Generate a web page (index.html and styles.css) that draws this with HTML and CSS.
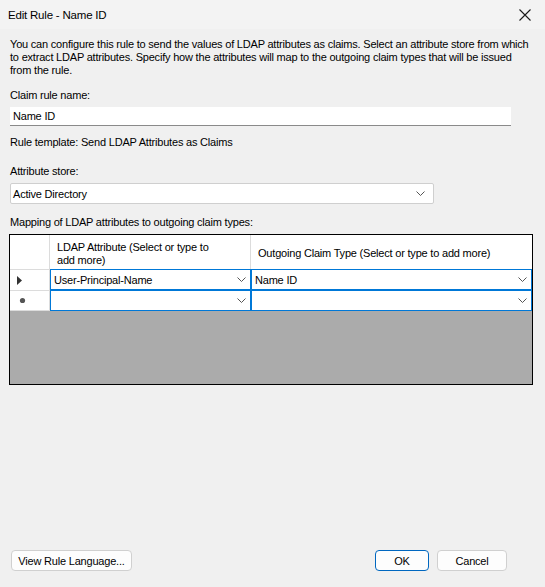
FILE: index.html
```html
<!DOCTYPE html>
<html>
<head>
<meta charset="utf-8">
<link rel="stylesheet" href="styles.css">
</head>
<body>
<div class="window">
  <div class="titlebar">
    <span class="title">Edit Rule - Name ID</span>
    <svg class="close" width="12" height="12" viewBox="0 0 12 12"><path d="M0.5 0.5 L11.5 11.5 M11.5 0.5 L0.5 11.5" stroke="#1a1a1a" stroke-width="1.1" fill="none"/></svg>
  </div>
  <div class="content">
    <p class="desc">You can configure this rule to send the values of LDAP attributes as claims. Select an attribute store from which to extract LDAP attributes. Specify how the attributes will map to the outgoing claim types that will be issued from the rule.</p>
    <div class="label l-name">Claim rule name:</div>
    <div class="textbox">Name ID</div>
    <div class="label l-template">Rule template: Send LDAP Attributes as Claims</div>
    <div class="label l-store">Attribute store:</div>
    <div class="select">
      <span>Active Directory</span>
      <svg class="chev" width="9" height="5" viewBox="0 0 9 5"><path d="M0.5 0.5 L4.5 4.5 L8.5 0.5" stroke="#555" stroke-width="1" fill="none"/></svg>
    </div>
    <div class="label l-map">Mapping of LDAP attributes to outgoing claim types:</div>
    <div class="grid">
      <div class="cell rowhead hdr"></div>
      <div class="cell hdr colhead colhead1">LDAP Attribute (Select or type to add more)</div>
      <div class="cell hdr colhead colhead2">Outgoing Claim Type (Select or type to add more)</div>

      <div class="cell rowhead"><svg width="6" height="9" viewBox="0 0 6 9"><path d="M0 0 L5 4.5 L0 9 Z" fill="#333"/></svg></div>
      <div class="cell combo"><span>User-Principal-Name</span><svg class="chev" width="9" height="5" viewBox="0 0 9 5"><path d="M0.5 0.5 L4.5 4.5 L8.5 0.5" stroke="#555" stroke-width="1" fill="none"/></svg></div>
      <div class="cell combo"><span>Name ID</span><svg class="chev" width="9" height="5" viewBox="0 0 9 5"><path d="M0.5 0.5 L4.5 4.5 L8.5 0.5" stroke="#555" stroke-width="1" fill="none"/></svg></div>

      <div class="cell rowhead rowhead-new"><svg width="7" height="7" viewBox="0 0 7 7"><circle cx="3.5" cy="3.5" r="2.6" fill="#555"/></svg></div>
      <div class="cell combo"><span></span><svg class="chev" width="9" height="5" viewBox="0 0 9 5"><path d="M0.5 0.5 L4.5 4.5 L8.5 0.5" stroke="#555" stroke-width="1" fill="none"/></svg></div>
      <div class="cell combo"><span></span><svg class="chev" width="9" height="5" viewBox="0 0 9 5"><path d="M0.5 0.5 L4.5 4.5 L8.5 0.5" stroke="#555" stroke-width="1" fill="none"/></svg></div>

      <div class="empty"></div>
    </div>
    <div class="spacer"></div>
    <div class="footer">
      <button class="btn btn-lang">View Rule Language...</button>
      <div class="right">
        <button class="btn btn-ok">OK</button>
        <button class="btn btn-cancel">Cancel</button>
      </div>
    </div>
  </div>
</div>
</body>
</html>
```
FILE: styles.css
```css
html, body {
  margin: 0;
  padding: 0;
}
body {
  width: 545px;
  height: 587px;
  overflow: hidden;
  background: #f0f0f0;
  font-family: "Liberation Sans", Arial, sans-serif;
  font-size: 11px;
  letter-spacing: -0.2px;
  color: #000;
}
.window {
  width: 545px;
  height: 587px;
  display: flex;
  flex-direction: column;
}
.titlebar {
  height: 29px;
  flex: none;
  background: #f3f3f3;
  display: flex;
  align-items: center;
  justify-content: space-between;
  padding: 0 14px 0 8px;
}
.title {
  font-size: 11.5px;
  color: #000;
}
.close {
  display: block;
}
.content {
  flex: 1;
  display: flex;
  flex-direction: column;
  padding: 9px 10px 16px 10px;
}
.desc {
  margin: 0;
  line-height: 13px;
  width: 525px;
}
.label {
  line-height: 14px;
}
.l-name { margin-top: 11px; }
.textbox {
  margin-top: 5px;
  height: 18px;
  width: 498px;
  background: #fff;
  border-bottom: 1px solid #8a8a8a;
  padding-left: 3px;
  line-height: 18px;
  box-sizing: content-box;
}
.l-template { margin-top: 9px; }
.l-store { margin-top: 15px; }
.select {
  margin-top: 5px;
  width: 412px;
  height: 19px;
  border: 1px solid #cfcfcf;
  border-radius: 2px;
  background: #fff;
  display: flex;
  align-items: center;
  justify-content: space-between;
  padding: 0 8px 0 2px;
  box-sizing: content-box;
}
.l-map { margin-top: 11px; }
.grid {
  margin-top: 5px;
  margin-left: -1px;
  width: 522px;
  height: 149px;
  border: 1px solid #000;
  display: grid;
  grid-template-columns: 40px 201px 281px;
  grid-template-rows: 34px 21px 21px 1fr;
  background: #ababab;
}
.cell {
  background: #fff;
  box-sizing: border-box;
}
.hdr {
  border-right: 1px solid #dcdcdc;
}
.colhead {
  padding: 3px 10px 0 7px;
  line-height: 13px;
  display: flex;
  align-items: center;
}
.colhead1 {
  padding-right: 30px;
}
.colhead2 {
  border-right: none;
}
.rowhead {
  border-right: 1px solid #dcdcdc;
  border-top: 1px solid #dcdcdc;
  display: flex;
  align-items: center;
  padding-left: 7px;
}
.rowhead-new {
  padding-left: 9px;
  border-bottom: 1px solid #dcdcdc;
}
.rowhead.hdr {
  border-top: none;
}
.combo {
  border: 1px solid #0078d7;
  display: flex;
  align-items: center;
  justify-content: space-between;
  padding: 0 4px 0 3px;
}
.empty {
  grid-column: 1 / 4;
  background: #ababab;
}
.spacer {
  flex: 1;
}
.footer {
  display: flex;
  justify-content: space-between;
  align-items: center;
  padding-left: 1px;
  padding-right: 28px;
}
.right {
  display: flex;
  gap: 8px;
}
.btn {
  font-family: "Liberation Sans", Arial, sans-serif;
  font-size: 11px;
  letter-spacing: -0.2px;
  white-space: nowrap;
  color: #000;
  height: 21px;
  background: #fdfdfd;
  border: 1px solid #d0d0d0;
  border-radius: 4px;
  padding: 0;
  margin: 0;
}
.btn-lang { width: 121px; }
.btn-ok {
  width: 54px;
  border-color: #0067c0;
}
.btn-cancel { width: 70px; }
```
